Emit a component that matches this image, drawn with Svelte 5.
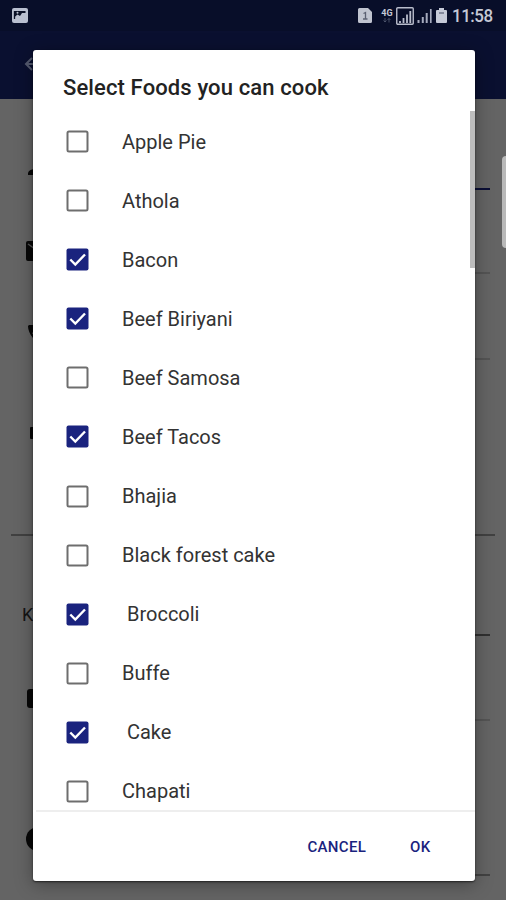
<script>
  const foods = [
    { name: 'Apple Pie', checked: false },
    { name: 'Athola', checked: false },
    { name: 'Bacon', checked: true },
    { name: 'Beef Biriyani', checked: true },
    { name: 'Beef Samosa', checked: false },
    { name: 'Beef Tacos', checked: true },
    { name: 'Bhajia', checked: false },
    { name: 'Black forest cake', checked: false },
    { name: ' Broccoli', checked: true },
    { name: 'Buffe', checked: false },
    { name: ' Cake', checked: true },
    { name: 'Chapati', checked: false }
  ];
  let items = $state(foods);
</script>

<div class="screen">
  <header class="status">
    <svg class="photo" width="16" height="15" viewBox="0 0 16 15">
      <rect width="16" height="15" rx="2" fill="#b9bfd0" />
      <path d="M2.500 3v8" fill="none" stroke="#0a1027" stroke-width="1.300" />
      <path d="M2 3h11.500v2L10 5 8 8 5.500 6.500 2 9.500z" fill="#0a1027" />
      <circle cx="5.500" cy="4.800" r="1" fill="#b9bfd0" />
    </svg>
    <div class="right">
      <svg width="14" height="15" viewBox="0 0 14 15">
        <path d="M1.500 0H10l4 4v9.500a1.500 1.500 0 0 1-1.500 1.500h-11A1.500 1.500 0 0 1 0 13.500v-12A1.500 1.500 0 0 1 1.500 0z" fill="#c0c4d0" />
        <path d="M5.500 5.500l2-1V11M5 11h4.500" fill="none" stroke="#5b6072" stroke-width="1.300" />
      </svg>
      <div class="net">
        <span>4G</span>
        <svg width="8" height="5" viewBox="0 0 8 5"><path d="M2 0v4M.5 2.500L2 4l1.500-1.500M6 4.500v-4M4.500 2L6 .5 7.500 2" fill="none" stroke="#565d75" stroke-width=".8" /></svg>
      </div>
      <svg class="sim" width="18" height="18" viewBox="0 0 18 18">
        <rect x=".75" y=".75" width="16.500" height="16.500" rx="1" fill="none" stroke="#b9bdcc" stroke-width="1.400" />
        <path d="M4 16v-2M7.500 16v-5M11 16V7.500M14.300 16V4" stroke="#b9bdcc" stroke-width="1.800" />
      </svg>
      <svg class="sig" width="15" height="16" viewBox="0 0 15 16">
        <path d="M1.500 15v-3M5.800 15V9M9.700 15V5" stroke="#a5aabd" stroke-width="2" />
        <path d="M13.800 15V1" stroke="#a5aabd" stroke-width="1.700" />
      </svg>
      <svg class="bat" width="11" height="15" viewBox="0 0 11 15">
        <path d="M3 0h5v2h2q1 0 1 1v11q0 1-1 1H1q-1 0-1-1V3q0-1 1-1h2z" fill="#c6cad7" />
        <path d="M3 4.500h5v1H3z" fill="#454b60" />
      </svg>
      <span class="time">11:58</span>
    </div>
  </header>
  <div class="appbar">
    <svg width="20" height="18" viewBox="0 0 20 18"><path d="M8 3L2 9l6 6M2 9h17" fill="none" stroke="#555b70" stroke-width="2" /></svg>
  </div>
  <main class="form">
    <section style="height:91px" class="navy">
      <svg class="i1" width="16" height="6" viewBox="0 0 16 6"><path d="M0 6V4q1-4 8-4t8 4v2z" fill="#080808" /></svg>
    </section>
    <section style="height:84px">
      <svg class="i2" width="24" height="20" viewBox="0 0 24 20"><rect width="24" height="20" rx="2" fill="#080808" /><path d="M2 3l10 7 10-7" fill="none" stroke="#555" stroke-width="1.500" /></svg>
    </section>
    <section style="height:86px">
      <svg class="i3" width="20" height="20" viewBox="0 0 20 20"><path d="M1 0h5l1 6-3 2q3 5 7 7l3-3 5 1v5C8 20 0 9 0 1z" fill="#080808" /></svg>
    </section>
    <section style="height:176px" class="wide">
      <svg class="i4" width="12" height="12" viewBox="0 0 12 12"><rect width="12" height="12" rx="1" fill="#080808" /></svg>
    </section>
    <section style="height:100px" class="strong"><span class="label">Kitchen</span></section>
    <section style="height:85px">
      <svg class="i5" width="20" height="19" viewBox="0 0 20 19"><rect width="20" height="19" rx="3" fill="#080808" /></svg>
    </section>
    <section style="height:155px" class="gray">
      <svg class="i6" width="24" height="24" viewBox="0 0 24 24"><circle cx="12" cy="12" r="12" fill="#080808" /></svg>
    </section>
  </main>
  <div class="edge"></div>

  <div class="dialog">
    <h1>Select Foods you can cook</h1>
    <ul>
      {#each items as item}
        <li>
          <button class="row" onclick={() => (item.checked = !item.checked)}>
            <svg class="box" width="23" height="23" viewBox="0 0 23 23">
              {#if item.checked}
                <rect x=".5" y=".5" width="22" height="22" rx="2" fill="#1a237e" />
                <path d="M4.300 11.500l5 5L19 6.500" fill="none" stroke="#fff" stroke-width="2.400" />
              {:else}
                <rect x="1.500" y="1.500" width="20" height="20" rx="1.500" fill="none" stroke="#6e6e6e" stroke-width="2" />
              {/if}
            </svg>
            <span>{item.name}</span>
          </button>
        </li>
      {/each}
    </ul>
    <footer>
      <button>CANCEL</button>
      <button>OK</button>
    </footer>
    <div class="thumb"></div>
  </div>
</div>

<style>
  .screen {
    position: relative;
    width: 506px;
    height: 900px;
    overflow: hidden;
    background: #646464;
    font-family: Roboto, sans-serif;
  }
  button {
    border: 0;
    background: none;
    padding: 0;
    font: inherit;
    letter-spacing: inherit;
    color: inherit;
  }
  svg { display: block; flex: none; }
  .status {
    height: 31px;
    box-sizing: border-box;
    padding: 0 12px 0 12px;
    display: flex;
    justify-content: space-between;
    align-items: center;
    background: #080e29;
  }
  .right { display: flex; align-items: center; color: #c5c9d6; }
  .net {
    width: 14px;
    margin-left: 8px;
    display: flex;
    flex-direction: column;
    align-items: center;
    font: 700 9px/9px Roboto, sans-serif;
  }
  .sim { margin-left: 2px; }
  .sig { margin-left: 3px; }
  .bat { margin-left: 4px; }
  .time { width: 42px; margin-left: 5px; font-size: 18px; font-weight: 500; letter-spacing: -0.5px; white-space: nowrap; transform: scaleX(0.94); transform-origin: left; }
  .appbar {
    height: 68px;
    box-sizing: border-box;
    padding: 24px 24px 0;
    background: #0a1030;
  }
  .form section {
    box-sizing: border-box;
    margin: 0 16px 0 52px;
    border-bottom: 2px solid #545454;
  }
  .form .navy { border-color: #0a0e35; }
  .form .strong { border-color: #303030; }
  .form .gray { border-color: #424242; }
  .form .wide { margin: 0 11px; border-color: #414141; }
  .form svg, .label { position: relative; }
  .i1 { left: -24px; top: 70px; }
  .i2 { left: -26px; top: 51px; }
  .i3 { left: -24px; top: 51px; }
  .i4 { left: 19px; top: 67px; }
  .i5 { left: -25px; top: 53px; }
  .i6 { left: -26px; top: 106px; }
  .label { left: -30px; top: 68px; font-size: 18px; color: #151515; }
  .edge {
    position: absolute;
    left: 502px;
    top: 156px;
    width: 8px;
    height: 92px;
    border-radius: 4px;
    background: #b9b9b9;
  }
  .dialog {
    position: absolute;
    left: 33px;
    top: 50px;
    width: 441.5px;
    height: 831px;
    display: flex;
    flex-direction: column;
    border-radius: 3px;
    background: #fff;
    box-shadow: 0 3px 18px rgba(0, 0, 0, 0.35), 0 1px 2px rgba(0, 0, 0, 0.6);
  }
  h1 {
    flex: none;
    height: 62px;
    margin: 0;
    padding: 25px 30px 0;
    box-sizing: border-box;
    font-size: 22px;
    line-height: 26px;
    font-weight: 500;
    letter-spacing: 0.12px;
    color: #222;
    white-space: nowrap;
  }
  ul {
    flex: none;
    height: 698px;
    margin: 0;
    padding: 0;
    overflow: hidden;
    list-style: none;
  }
  .row {
    width: 100%;
    height: 59.09px;
    display: flex;
    align-items: center;
    gap: 33px;
    padding-left: 33px;
    text-align: left;
    font-size: 20px;
    color: #333;
    white-space: pre;
  }
  li { height: 59.09px; }
  footer {
    flex: 1;
    margin-left: 3px;
    padding-right: 44px;
    display: flex;
    justify-content: flex-end;
    align-items: center;
    gap: 44px;
    border-top: 2px solid #eee;
    color: #1a237e;
    font-size: 15px;
    font-weight: 500;
    letter-spacing: 0.3px;
  }
  .thumb {
    position: absolute;
    right: 0;
    top: 61px;
    width: 5px;
    height: 157px;
    background: #bdbdbd;
  }
</style>
